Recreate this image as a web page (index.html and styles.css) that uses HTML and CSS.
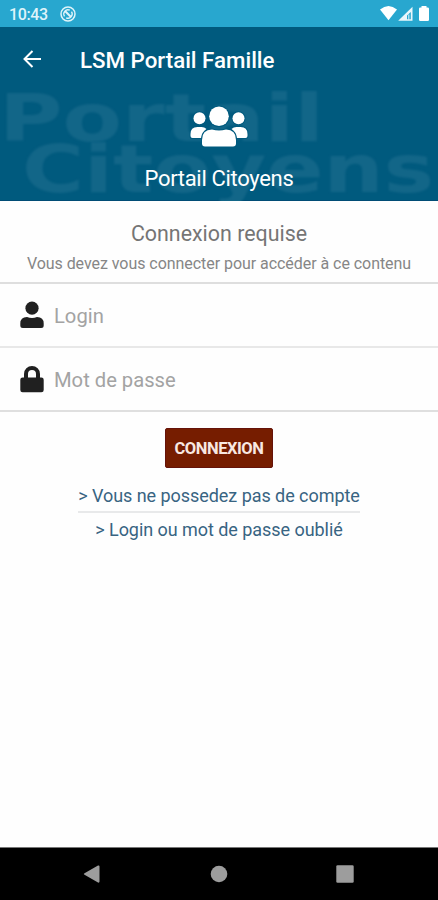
FILE: index.html
```html
<!DOCTYPE html>
<html lang="fr">
<head>
<meta charset="utf-8">
<title>LSM Portail Famille</title>
<link rel="stylesheet" href="styles.css">
</head>
<body>
<div class="status">
  <span class="time">10:43</span>
  <svg class="sync" width="16" height="16" viewBox="0 0 16 16" fill="none" stroke="currentColor"><circle cx="8" cy="8" r="7" stroke-width="1.500"/><path d="M4.500 10.300A4.200 4.200 0 0 1 9.800 4.200M11.500 5.700A4.200 4.200 0 0 1 6.200 11.800" stroke-width="1.300"/><path d="M5 5l6 6" stroke-width="2"/></svg>
  <svg class="signals" width="50" height="16" viewBox="0 0 50 16" fill="currentColor"><path d="M0 3.500Q8.500-3.500 17 3.500L8.500 14.200z"/><path d="M18.200 14.700L32.500.8v13.900zM27 13.200h3.800V6L27 9.500z" fill-rule="evenodd" opacity=".9"/><path d="M28 8.500h1.500v5H28z" opacity=".6"/><path d="M41.500 0h5v1.500h1.200q1.300 0 1.300 1.300v10.900q0 1.300-1.300 1.300h-7.400q-1.300 0-1.300-1.300V2.800q0-1.300 1.300-1.300h1.200z"/></svg>
</div>
<header class="appbar">
  <svg width="18" height="18" viewBox="0 0 18 18" fill="none" stroke="currentColor" stroke-width="2"><path d="M18 9H1.500M9.500 1L1.500 9l8 8"/></svg>
  <h1>LSM Portail Famille</h1>
</header>
<section class="banner">
  <svg class="watermark" width="438" height="111" viewBox="0 0 438 111"><text x="-1" y="51" textLength="325" lengthAdjust="spacingAndGlyphs">Portail</text><text x="22" y="102" textLength="412" lengthAdjust="spacingAndGlyphs">Citoyens</text></svg>
  <svg class="people" width="58" height="42" viewBox="0 0 58 42"><g fill="#fff"><circle cx="9.500" cy="12.300" r="6"/><circle cx="48.500" cy="12.300" r="6"/><path d="M.5 30v-2q0-7 7-7h4q3 0 5 2-4 3-5 9H2.500q-2 0-2-2zM57.500 30v-2q0-7-7-7h-4q-3 0-5 2 4 3 5 9h9q2 0 2-2z"/><circle cx="29" cy="10.300" r="9.800"/><path d="M12 37.500V34Q12 23.500 22 23.500q7 2 14 0 10 0 10 10.500v3.500q0 3-3 3H15q-3 0-3-3z"/></g></svg>
  <p>Portail Citoyens</p>
</section>
<main>
  <div class="intro"><h2>Connexion requise</h2><p>Vous devez vous connecter pour accéder à ce contenu</p></div>
  <div class="field"><svg width="24" height="27" viewBox="0 0 24 27" fill="currentColor"><circle cx="12" cy="6.200" r="6.600"/><path d="M.3 23.500V21.500Q.3 15 7 15q5 2 10 0 6.700 0 6.700 6.500v2q0 2.500-2.500 2.500H2.800Q.3 26 .3 23.500z"/></svg><span>Login</span></div>
  <div class="field second"><svg width="24" height="27" viewBox="0 0 24 27"><path d="M6 13V8a6 6 0 0 1 12 0V13" fill="none" stroke="currentColor" stroke-width="4"/><rect x=".3" y="11.500" width="23.400" height="14.700" rx="2.300" fill="currentColor"/></svg><span>Mot de passe</span></div>
  <div class="actions">
    <button>CONNEXION</button>
    <a class="create">&gt; Vous ne possedez pas de compte</a>
    <a class="forgot">&gt; Login ou mot de passe oublié</a>
  </div>
</main>
<nav>
  <svg width="18" height="18" viewBox="0 0 18 18"><path d="M1.500 8.200L15 .5q1.500-.5 1.500 1v15q0 1.500-1.500 1L1.500 9.800q-1.500-.8 0-1.600z"/></svg>
  <svg width="18" height="18" viewBox="0 0 18 18"><circle cx="9" cy="9" r="8.300"/></svg>
  <svg width="18" height="18" viewBox="0 0 18 18"><rect x=".3" y=".3" width="17.400" height="17.400" rx="1.300"/></svg>
</nav>
</body>
</html>
```
FILE: styles.css
```css
* { box-sizing: border-box; }
body {
  margin: 0;
  width: 438px;
  height: 900px;
  display: flex;
  flex-direction: column;
  overflow: hidden;
  background: #fefefe;
  font-family: Roboto, "Liberation Sans", sans-serif;
}
h1, h2, p { margin: 0; font-weight: 400; white-space: nowrap; }
svg { display: block; flex: none; overflow: visible; }
.status {
  height: 27px;
  flex: none;
  display: flex;
  align-items: center;
  padding: 1px 8px 0 9px;
  background: #28a7cf;
  color: #dff4fa;
}
.time { font-size: 16px; line-height: 28px; width: 51px; padding-top: 1px; letter-spacing: -.35px; font-weight: 500; }
.signals { margin-left: auto; color: #fff; }
.appbar {
  height: 63px;
  flex: none;
  display: flex;
  align-items: center;
  gap: 39px;
  padding: 0 23px;
  background: #005a7e;
  color: #fff;
}
.appbar h1 { font-size: 22.300px; font-weight: 500; line-height: 30px; padding-top: 3px; }
.banner {
  position: relative;
  height: 111px;
  flex: none;
  display: flex;
  flex-direction: column;
  align-items: center;
  padding-top: 16px;
  background: #005a7e;
  border-bottom: 1px solid #004c75;
  color: #fff;
}
.watermark { position: absolute; left: 0; top: 0; overflow: hidden; }
.watermark text { font: 700 66px "DejaVu Sans", sans-serif; fill: #126688; filter: blur(.8px); }
.people { position: relative; }
.people g { stroke: #005a7e; stroke-width: 2px; paint-order: stroke; }
.banner p { position: relative; font-size: 22px; line-height: 28px; margin-top: 17px; letter-spacing: -.32px; }
main { flex: 1; }
.intro {
  height: 83px;
  padding-top: 19px;
  text-align: center;
  border-bottom: 2px solid #dedede;
}
.intro h2 { font-size: 21.400px; line-height: 28px; color: #757575; }
.intro p { font-size: 16px; line-height: 22px; margin-top: 5px; color: #868686; letter-spacing: -.05px; }
.field {
  height: 64px;
  display: flex;
  align-items: center;
  gap: 10px;
  padding-left: 20px;
  border-bottom: 2px solid #e8e8e8;
  color: #202020;
  font-size: 20.200px;
}
.field span { color: #a3a3a3; padding-top: 2px; }
.second { border-bottom-color: #dfdfdf; }
.actions { display: flex; flex-direction: column; align-items: center; padding-top: 16px; }
button {
  width: 108px;
  height: 40px;
  padding: 0;
  border: 1px solid #65130a;
  border-radius: 2px;
  background: #761d00;
  color: #f8e8e2;
  font: 700 16.500px Roboto, sans-serif;
  letter-spacing: -.45px;
}
.actions a { color: #386482; font-size: 18px; letter-spacing: -.05px; white-space: nowrap; }
.create { margin-top: 13px; height: 32px; line-height: 29px; border-bottom: 2px solid #e8e9ea; }
.forgot { margin-top: 2px; line-height: 30px; }
nav {
  height: 53px;
  flex: none;
  display: flex;
  justify-content: space-between;
  padding: 17px 84px 0 83px;
  background: #000;
  border-top: 1px solid #777;
  fill: #9d9d9d;
}
```
